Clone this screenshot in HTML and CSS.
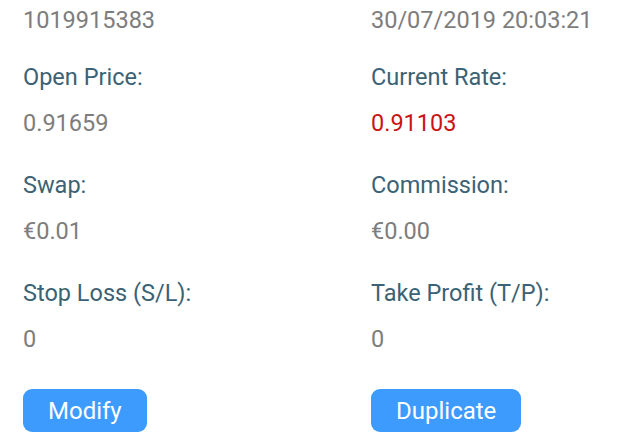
FILE: index.html
```html
<!DOCTYPE html>
<html lang="en">
<head>
    <meta charset="UTF-8">
    <meta name="viewport" content="width=device-width, initial-scale=1.0">
    <title>Position Details</title>
    <link rel="stylesheet" href="styles.css">
</head>
<body>
    <div class="details">
        <div class="grid top">
            <div class="value">1019915383</div>
            <div class="value">30/07/2019 20:03:21</div>
        </div>
        <div class="grid">
            <div class="field">
                <div class="label">Open Price:</div>
                <div class="value">0.91659</div>
            </div>
            <div class="field">
                <div class="label">Current Rate:</div>
                <div class="value down">0.91103</div>
            </div>
            <div class="field">
                <div class="label">Swap:</div>
                <div class="value">€0.01</div>
            </div>
            <div class="field">
                <div class="label">Commission:</div>
                <div class="value">€0.00</div>
            </div>
            <div class="field">
                <div class="label">Stop Loss (S/L):</div>
                <div class="value">0</div>
            </div>
            <div class="field">
                <div class="label">Take Profit (T/P):</div>
                <div class="value">0</div>
            </div>
        </div>
        <div class="grid actions">
            <div><button class="btn">Modify</button></div>
            <div><button class="btn">Duplicate</button></div>
        </div>
    </div>
</body>
</html>
```

FILE: styles.css
```css
body {
    font-family: Roboto, "Liberation Sans", sans-serif;
    background-color: #ffffff;
    margin: 0;
}
.details {
    padding: 5px 0 0 23px;
}
.grid {
    display: grid;
    grid-template-columns: 348px 1fr;
    row-gap: 32px;
}
.top {
    margin-bottom: 27px;
}
.field {
    display: flex;
    flex-direction: column;
    gap: 16px;
}
.label {
    font-size: 23.5px;
    line-height: 30px;
    color: #3b6275;
}
.value {
    font-size: 23.5px;
    line-height: 30px;
    color: #7d7d7d;
}
.value.down {
    color: #c91414;
}
.actions {
    margin-top: 35px;
}
.btn {
    font-family: Roboto, "Liberation Sans", sans-serif;
    font-size: 24px;
    height: 43px;
    padding: 0 25px;
    background: #3c9bfd;
    color: #ffffff;
    border: none;
    border-radius: 9px;
}
```
